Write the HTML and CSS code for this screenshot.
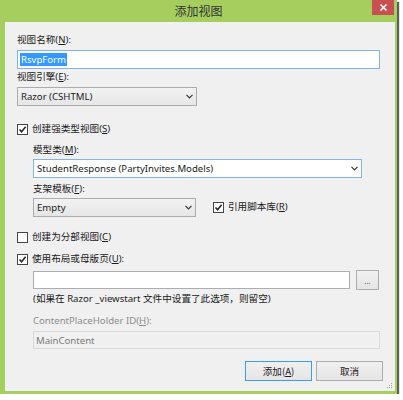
FILE: index.html
```html
<!DOCTYPE html>
<html lang="zh-CN">
<head>
<meta charset="utf-8">
<title>添加视图</title>
<link rel="stylesheet" href="styles.css">
</head>
<body>
<div class="window">
  <div class="titlebar">
    <span></span>
    <span class="title">添加视图</span>
    <span class="close"><svg width="9" height="9" viewBox="0 0 9 9"><path d="M1.5 1.5 L7.5 7.5 M7.5 1.5 L1.5 7.5" stroke="#fff" stroke-width="1.6"/></svg></span>
  </div>
  <div class="content">
    <div class="label mt12">视图名称(<u>N</u>):</div>
    <div class="textbox focused w-name mt4"><span class="sel">RsvpForm</span></div>
    <div class="label mt2">视图引擎(<u>E</u>):</div>
    <div class="combo w-engine mt4"><span>Razor (CSHTML)</span><svg class="chev" width="7" height="5" viewBox="0 0 7 5"><path d="M0.5 0.8 L3.5 3.8 L6.5 0.8" fill="none" stroke="#333" stroke-width="1.2"/></svg></div>

    <div class="check mt17"><span class="box"><svg width="9" height="9" viewBox="0 0 9 9"><path d="M1.5 4.5 L3.6 6.8 L7.6 1.8" fill="none" stroke="#222" stroke-width="1.5"/></svg></span><span>创建强类型视图(<u>S</u>)</span></div>
    <div class="indent">
      <div class="label mt9">模型类(<u>M</u>):</div>
      <div class="combo edit w-model mt3"><span>StudentResponse (PartyInvites.Models)</span><svg class="chev" width="7" height="5" viewBox="0 0 7 5"><path d="M0.5 0.8 L3.5 3.8 L6.5 0.8" fill="none" stroke="#333" stroke-width="1.2"/></svg></div>
      <div class="label mt5">支架模板(<u>F</u>):</div>
      <div class="row mt2">
        <div class="combo w-scaffold"><span>Empty</span><svg class="chev" width="7" height="5" viewBox="0 0 7 5"><path d="M0.5 0.8 L3.5 3.8 L6.5 0.8" fill="none" stroke="#333" stroke-width="1.2"/></svg></div>
        <div class="check"><span class="box"><svg width="9" height="9" viewBox="0 0 9 9"><path d="M1.5 4.5 L3.6 6.8 L7.6 1.8" fill="none" stroke="#222" stroke-width="1.5"/></svg></span><span>引用脚本库(<u>R</u>)</span></div>
      </div>
    </div>

    <div class="check mt14"><span class="box"></span><span>创建为分部视图(<u>C</u>)</span></div>
    <div class="check mt10"><span class="box"><svg width="9" height="9" viewBox="0 0 9 9"><path d="M1.5 4.5 L3.6 6.8 L7.6 1.8" fill="none" stroke="#222" stroke-width="1.5"/></svg></span><span>使用布局或母版页(<u>U</u>):</span></div>
    <div class="indent">
      <div class="row gap6 mt5">
        <div class="textbox w-layout"></div>
        <div class="browse">...</div>
      </div>
      <div class="label mt3">(如果在 Razor _viewstart 文件中设置了此选项，则留空)</div>
      <div class="label disabled mt10">ContentPlaceHolder ID(<u>H</u>):</div>
      <div class="textbox disabled-box w-cph mt4">MainContent</div>
    </div>

    <div class="buttons">
      <div class="btn default">添加(<u>A</u>)</div>
      <div class="btn">取消</div>
    </div>
    <svg class="grip" width="7" height="7" viewBox="0 0 7 7"><g fill="#a0a0a0"><rect x="5" y="1" width="1" height="1"/><rect x="3" y="3" width="1" height="1"/><rect x="5" y="3" width="1" height="1"/><rect x="1" y="5" width="1" height="1"/><rect x="3" y="5" width="1" height="1"/><rect x="5" y="5" width="1" height="1"/></g></svg>
  </div>
</div>
</body>
</html>
```
FILE: styles.css
```css
html, body {
  margin: 0;
  padding: 0;
  background: #ffffff;
}
body {
  font-family: "Noto Sans", "Noto Sans CJK SC", sans-serif;
  font-size: 9.6px;
  color: #1a1a1a;
}
.window {
  width: 397px;
  height: 394px;
  background: #a6ce5f;
  display: flex;
  flex-direction: column;
  box-shadow: 2px 2px 1px rgba(40, 40, 40, 0.75);
}
.titlebar {
  height: 22px;
  display: grid;
  grid-template-columns: 1fr auto 1fr;
  align-items: start;
}
.title {
  font-family: "Noto Sans CJK SC", sans-serif;
  font-size: 12px;
  line-height: 22px;
  color: #333333;
}
.close {
  justify-self: end;
  margin-right: 3px;
  width: 22px;
  height: 15px;
  background: #c75050;
  display: flex;
  align-items: center;
  justify-content: center;
}
.close svg { display: block; }
.content {
  flex: 1;
  margin: 0 2px 3px 5px;
  background: #f0f0f0;
  padding: 0 12px 0 12px;
  position: relative;
  display: flex;
  flex-direction: column;
  align-items: flex-start;
}
.label {
  height: 12px;
  line-height: 12px;
  white-space: nowrap;
}
.label.disabled { color: #8d8d8d; }
u { text-decoration: underline; text-underline-offset: 1px; }
.mt2 { margin-top: 2px; }
.mt3 { margin-top: 3px; }
.mt4 { margin-top: 4px; }
.mt5 { margin-top: 5px; }
.mt9 { margin-top: 9px; }
.mt10 { margin-top: 10px; }
.mt12 { margin-top: 12px; }
.mt14 { margin-top: 14px; }
.mt17 { margin-top: 17px; }

.textbox {
  box-sizing: border-box;
  height: 19px;
  background: #ffffff;
  border: 1px solid #abadb3;
  padding: 0 2px;
  display: flex;
  align-items: center;
  white-space: nowrap;
}
.textbox.focused { border-color: #7eb4ea; }
.sel {
  background: #3399ff;
  color: #ffffff;
  line-height: 13px;
  padding: 0 1px 0 1px;
}
.w-name { width: 363px; }
.w-layout { width: 317px; height: 18px; }
.w-cph { width: 347px; height: 18px; }
.disabled-box {
  background: #f0f0f0;
  border-color: #d9d9d9;
  color: #7a7a7a;
  padding-left: 2px;
}

.combo {
  box-sizing: border-box;
  height: 19px;
  border: 1px solid #acacac;
  background: linear-gradient(#f2f2f2, #e6e6e6);
  padding: 0 3px 0 3px;
  display: flex;
  align-items: center;
  justify-content: space-between;
  white-space: nowrap;
}
.combo.edit {
  background: #ffffff;
  border-color: #7eb4ea;
}
.chev { display: block; }
.w-engine { width: 180px; }
.w-model { width: 329px; }
.w-scaffold { width: 163px; }

.row {
  display: flex;
  align-items: center;
  height: 20px;
}
.row .check { margin-left: 17px; }
.gap6 { gap: 6px; }

.check {
  display: flex;
  align-items: center;
  height: 12px;
  line-height: 12px;
  white-space: nowrap;
}
.box {
  box-sizing: border-box;
  width: 11px;
  height: 11px;
  border: 1px solid #444444;
  background: #ffffff;
  margin-right: 4px;
  display: flex;
  align-items: center;
  justify-content: center;
}
.box svg { display: block; }

.indent {
  padding-left: 16px;
  display: flex;
  flex-direction: column;
  align-items: flex-start;
}

.browse {
  box-sizing: border-box;
  width: 23px;
  height: 20px;
  border: 1px solid #acacac;
  background: linear-gradient(#f0f0f0, #e5e5e5);
  display: flex;
  align-items: center;
  justify-content: center;
  font-size: 8px;
  color: #555555;
}

.buttons {
  align-self: flex-end;
  margin-top: 12px;
  display: flex;
  gap: 4px;
}
.btn {
  box-sizing: border-box;
  width: 67px;
  height: 20px;
  border: 1px solid #acacac;
  background: linear-gradient(#f0f0f0, #e5e5e5);
  display: flex;
  align-items: center;
  justify-content: center;
  font-family: "Noto Sans CJK SC", sans-serif;
}
.btn.default { border-color: #3c9af0; }
.grip {
  position: absolute;
  right: 2px;
  bottom: 2px;
}
```
